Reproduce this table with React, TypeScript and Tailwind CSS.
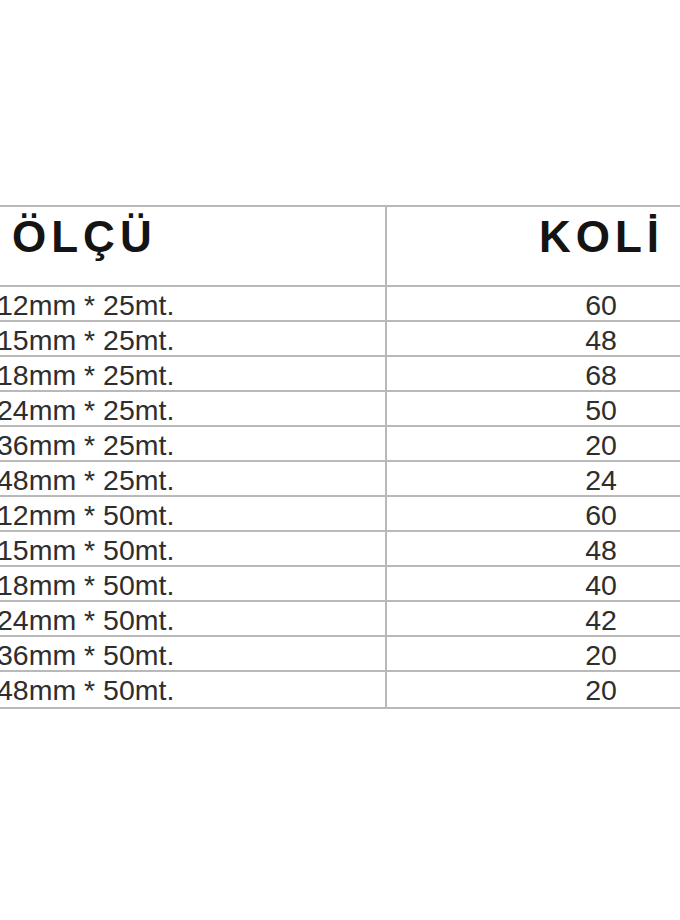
import React from "react";

const rows: [string, string][] = [
  ["12mm * 25mt.", "60"],
  ["15mm * 25mt.", "48"],
  ["18mm * 25mt.", "68"],
  ["24mm * 25mt.", "50"],
  ["36mm * 25mt.", "20"],
  ["48mm * 25mt.", "24"],
  ["12mm * 50mt.", "60"],
  ["15mm * 50mt.", "48"],
  ["18mm * 50mt.", "40"],
  ["24mm * 50mt.", "42"],
  ["36mm * 50mt.", "20"],
  ["48mm * 50mt.", "20"],
];

const App = () => {
  return (
    <div
      className="h-[920px] w-[680px] overflow-hidden bg-white pt-[205px]"
      style={{ fontFamily: '"Liberation Sans", Arial, sans-serif' }}
    >
      <div className="ml-[-20px] w-[835px] border-t-2 border-b-2 border-[#b9b9b9]">
        <div className="grid h-[80px] grid-cols-[407px_428px] border-b-2 border-[#b9b9b9] text-[44px] font-bold leading-[52px] tracking-[5px] text-[#141414]">
          <div className="border-r-2 border-[#b9b9b9] pl-[32px] pt-[4px]">ÖLÇÜ</div>
          <div className="pl-[1px] pt-[4px] text-center">KOLİ</div>
        </div>
        {rows.map(([size, qty], i) => (
          <div
            key={i}
            className={
              "grid h-[35px] grid-cols-[407px_428px] text-[28.5px] leading-[33px] text-[#2e2e2e] " +
              (i < rows.length - 1 ? "border-b-2 border-[#b9b9b9]" : "")
            }
          >
            <div className="border-r-2 border-[#b9b9b9] pl-[17px] pt-[2px]">{size}</div>
            <div className="pt-[2px] text-center">{qty}</div>
          </div>
        ))}
      </div>
    </div>
  );
};

export default App;
